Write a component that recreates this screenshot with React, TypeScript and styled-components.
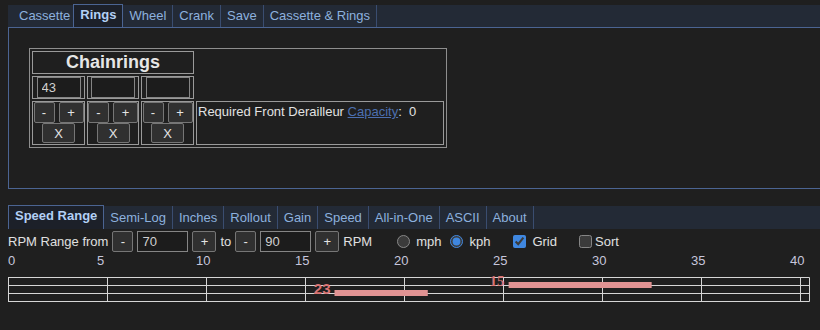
import React from "react";
import styled, { createGlobalStyle, css } from "styled-components";

const GlobalStyle = createGlobalStyle`
  html, body { margin: 0; padding: 0; background: #1f1f1f; overflow: hidden; }
  body {
    font-family: "Liberation Sans", Arial, sans-serif;
    font-size: 13px;
    color: #dedede;
    color-scheme: dark;
  }
  * { box-sizing: border-box; }
`;

const Page = styled.div`
  padding: 5px 0 0 8px;
`;

const TabBar = styled.nav<{ $h: number; $rule?: boolean; $inset?: number; $mt?: number }>`
  display: flex;
  align-items: flex-end;
  height: ${(p) => p.$h + (p.$rule ? 1 : 0)}px;
  margin-top: ${(p) => p.$mt ?? 0}px;
  padding-left: ${(p) => p.$inset ?? 0}px;
  background: #232a36;
  border-bottom: ${(p) => (p.$rule ? "1px solid #4b6492" : "none")};
`;

const Tab = styled.div<{ $active?: boolean; $h: number }>`
  flex: none;
  height: ${(p) => p.$h}px;
  line-height: ${(p) => p.$h}px;
  padding: 0 6px;
  border-right: 1px solid #3a4d70;
  color: #8db1de;
  white-space: nowrap;
  cursor: pointer;
  ${(p) =>
    p.$active &&
    css`
      position: relative;
      height: ${p.$h + 1}px;
      line-height: 19px;
      border: 1px solid #4b6492;
      border-bottom: none;
      background: #1c2029;
      color: #b3d0f5;
      font-weight: bold;
      &:not(:first-child) {
        margin-left: -4px;
      }
    `}
`;

const Panel = styled.section`
  border-left: 1px solid #4b6492;
  border-bottom: 1px solid #4b6492;
  padding: 20px 20px 40px 20px;
`;

const RingGrid = styled.div`
  display: inline-grid;
  grid-template-columns: 53px 52px 53px 248px;
  grid-template-rows: 23px 23px 44px;
  gap: 2px;
  padding: 2px;
  border: 1px solid #8e8e8e;
  vertical-align: top;
`;

const Cell = styled.div<{ $span?: number; $newRow?: boolean }>`
  border: 1px solid #9a9a9a;
  grid-column: ${(p) => (p.$newRow ? "1 / span " + (p.$span ?? 1) : "span " + (p.$span ?? 1))};
`;

const HeadCell = styled(Cell)`
  font-size: 18px;
  font-weight: bold;
  line-height: 21px;
  text-align: center;
  color: #e6e6e6;
`;

const InputCell = styled(Cell)`
  display: flex;
  align-items: center;
  justify-content: center;
`;

const ButtonCell = styled(Cell)`
  display: grid;
  grid-template-columns: 21px 25px;
  grid-template-rows: 21px 20px;
  column-gap: 4px;
  justify-content: center;
  align-content: start;
`;

const InfoCell = styled(Cell)`
  padding: 2px 1px;
  line-height: 15px;
  color: #e2e2e2;
`;

const Link = styled.a`
  color: #4c6fb0;
  text-decoration: underline;
`;

const TextBox = styled.input<{ $w: number }>`
  width: ${(p) => p.$w}px;
  height: 21px;
  margin: 0;
  padding: 0 4px;
  border: 1px solid #858585;
  background: #1c1c1c;
  color: #d0d0d0;
  font-family: "Liberation Sans", Arial, sans-serif;
  font-size: 13px;
  outline: none;
`;

const Btn = styled.button<{ $w: number; $h?: number; $wide?: boolean }>`
  width: ${(p) => p.$w}px;
  height: ${(p) => p.$h ?? 21}px;
  margin: 0;
  padding: 0;
  border: 1px solid #767676;
  border-radius: 2px;
  background: #303030;
  color: #e4e4e4;
  font-family: "Liberation Sans", Arial, sans-serif;
  font-size: 13px;
  line-height: 1;
  cursor: pointer;
  ${(p) =>
    p.$wide &&
    css`
      grid-column: 1 / span 2;
      justify-self: center;
    `}
`;

const Controls = styled.div`
  display: flex;
  align-items: center;
  gap: 4px;
  height: 24px;
  white-space: nowrap;
  color: #e0e0e0;
`;

const Choice = styled.label<{ $ml: number; $gap: number }>`
  display: inline-flex;
  align-items: center;
  gap: ${(p) => p.$gap}px;
  margin-left: ${(p) => p.$ml}px;
  input {
    margin: 0;
    width: 13px;
    height: 13px;
    accent-color: #3f87e0;
  }
`;

const Chart = styled.svg`
  display: block;
`;

const BarLabel = styled.text<{ $serif?: boolean }>`
  font-family: ${(p) => (p.$serif ? '"Liberation Serif", serif' : '"Liberation Sans", Arial, sans-serif')};
  font-size: 15px;
  font-weight: bold;
  fill: #d87474;
`;

const AxisLabel = styled.text`
  font-family: "Liberation Sans", Arial, sans-serif;
  font-size: 13px;
  fill: #c6c6dc;
`;

const TOP_TABS = ["Cassette", "Rings", "Wheel", "Crank", "Save", "Cassette & Rings"];
const BOTTOM_TABS = ["Speed Range", "Semi-Log", "Inches", "Rollout", "Gain", "Speed", "All-in-One", "ASCII", "About"];

const PX_PER_KPH = 19.8;
const CIRC = 2.1;
const RPM_LO = 70;
const RPM_HI = 90;
const RING = 43;
const BARS = [
  { cog: 15, row: 1, serif: true },
  { cog: 23, row: 2, serif: false },
];

const kph = (ring: number, cog: number, rpm: number) => (ring / cog) * CIRC * rpm * 0.06;

function SpeedChart() {
  const ticks = [0, 5, 10, 15, 20, 25, 30, 35, 40];
  const top = 24.5;
  const right = 801.5;
  return (
    <Chart width={812} height={60} viewBox="0 0 812 60">
      {ticks.map((v) => (
        <AxisLabel key={"l" + v} x={v === 0 ? 0 : v * PX_PER_KPH - 10} y={12}>
          {v}
        </AxisLabel>
      ))}
      {[0, 1, 2, 3].map((r) => (
        <line key={"h" + r} x1={0} x2={right} y1={top + r * 8} y2={top + r * 8} stroke="#d6d6d6" strokeWidth={1} />
      ))}
      {ticks.map((v) => (
        <line
          key={"v" + v}
          x1={Math.round(v * PX_PER_KPH) + 0.5}
          x2={Math.round(v * PX_PER_KPH) + 0.5}
          y1={top}
          y2={top + 24}
          stroke="#d6d6d6"
          strokeWidth={1}
        />
      ))}
      <line x1={right} x2={right} y1={top} y2={top + 24} stroke="#d6d6d6" strokeWidth={1} />
      {BARS.map((b) => {
        const x0 = kph(RING, b.cog, RPM_LO) * PX_PER_KPH;
        const x1 = kph(RING, b.cog, RPM_HI) * PX_PER_KPH;
        const cy = 24 + b.row * 8;
        return (
          <g key={b.cog}>
            <rect x={x0} y={cy - 3} width={x1 - x0} height={6} fill="#e09292" />
            <BarLabel x={x0 - 4} y={cy + 1} textAnchor="end" $serif={b.serif}>
              {b.cog}
            </BarLabel>
          </g>
        );
      })}
    </Chart>
  );
}

export default function App() {
  return (
    <>
      <GlobalStyle />
      <Page>
        <TabBar $h={22} $rule $inset={5}>
          {TOP_TABS.map((t) => (
            <Tab key={t} $h={22} $active={t === "Rings"}>
              {t}
            </Tab>
          ))}
        </TabBar>
        <Panel>
          <RingGrid>
            <HeadCell $span={3}>Chainrings</HeadCell>
            {[RING, "", ""].map((v, i) => (
              <InputCell key={"in" + i} $newRow={i === 0}>
                <TextBox $w={44} defaultValue={String(v)} />
              </InputCell>
            ))}
            {[0, 1, 2].map((i) => (
              <ButtonCell key={"bc" + i} $newRow={i === 0}>
                <Btn $w={21}>-</Btn>
                <Btn $w={25}>+</Btn>
                <Btn $w={33} $h={20} $wide>
                  X
                </Btn>
              </ButtonCell>
            ))}
            <InfoCell>
              Required Front Derailleur <Link href="#">Capacity</Link>:{"\u00a0\u00a0"}0
            </InfoCell>
          </RingGrid>
        </Panel>
        <TabBar $h={23} $mt={17}>
          {BOTTOM_TABS.map((t) => (
            <Tab key={t} $h={23} $active={t === "Speed Range"}>
              {t}
            </Tab>
          ))}
        </TabBar>
        <Controls>
          <span>RPM Range from</span>
          <Btn $w={21}>-</Btn>
          <TextBox $w={51} defaultValue={String(RPM_LO)} />
          <Btn $w={24}>+</Btn>
          <span>to</span>
          <Btn $w={21}>-</Btn>
          <TextBox $w={51} defaultValue={String(RPM_HI)} />
          <Btn $w={24}>+</Btn>
          <span>RPM</span>
          <Choice $ml={21} $gap={6}>
            <input type="radio" name="unit" />
            mph
          </Choice>
          <Choice $ml={5} $gap={6}>
            <input type="radio" name="unit" defaultChecked />
            kph
          </Choice>
          <Choice $ml={19} $gap={6}>
            <input type="checkbox" defaultChecked />
            Grid
          </Choice>
          <Choice $ml={18} $gap={3}>
            <input type="checkbox" />
            Sort
          </Choice>
        </Controls>
        <SpeedChart />
      </Page>
    </>
  );
}
